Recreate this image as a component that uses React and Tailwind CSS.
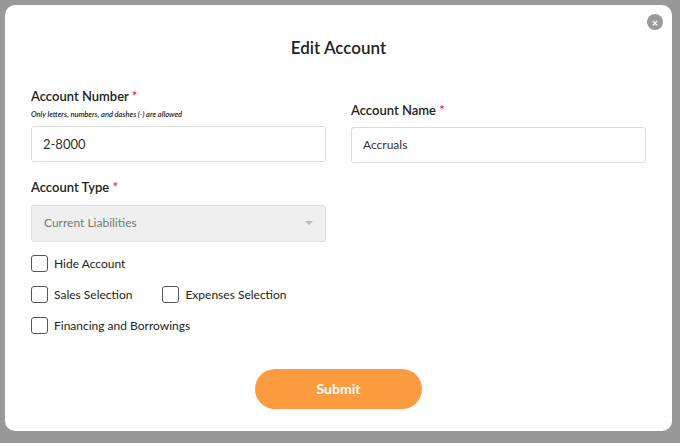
export default function App() {
  const Box = ({ label }) => (
    <label className="flex items-center gap-[6px] text-[12px] text-[#222]">
      <span className="w-[17px] h-[17px] border border-[#555] rounded-[3px] bg-white" />
      {label}
    </label>
  )
  return (
    <div className="w-[680px] h-[443px] bg-[#999] pt-[5px] pl-[5px]" style={{ fontFamily: 'Lato, "Open Sans", sans-serif' }}>
      <div className="relative w-[667px] h-[426px] bg-white rounded-[10px] px-[26px] pt-[30px]">
        <span className="absolute right-[9px] top-[9px] w-[16px] h-[16px] rounded-full bg-[#9a9a9a] flex items-center justify-center text-white text-[11px] font-bold leading-none">×</span>
        <h1 className="text-center text-[17px] font-semibold text-[#222]">Edit Account</h1>
        <div className="grid grid-cols-2 gap-[25px] mt-[26px]">
          <div>
            <p className="text-[13px] font-semibold text-[#222]">Account Number <span className="text-[#e0245e]">*</span></p>
            <p className="text-[7.5px] italic font-semibold text-[#222] mt-[3px]">Only letters, numbers, and dashes (-) are allowed</p>
            <div className="mt-[6px] h-[36px] border border-[#ddd] rounded-[3px] flex items-center px-[11px] text-[13px] text-[#333]">2-8000</div>
            <p className="mt-[16px] text-[13px] font-semibold text-[#222]">Account Type <span className="text-[#e0245e]">*</span></p>
            <div className="mt-[7px] h-[37px] bg-[#efefef] border border-[#e0e0e0] rounded-[3px] flex items-center justify-between px-[12px] text-[12px] text-[#777]">
              Current Liabilities
              <span className="w-0 h-0 border-x-[4px] border-x-transparent border-t-[4px] border-t-[#bbb]" />
            </div>
          </div>
          <div className="pt-[14px]">
            <p className="text-[13px] font-semibold text-[#222]">Account Name <span className="text-[#e0245e]">*</span></p>
            <div className="mt-[7px] h-[36px] border border-[#ddd] rounded-[3px] flex items-center px-[11px] text-[12px] text-[#333]">Accruals</div>
          </div>
        </div>
        <div className="mt-[13px] flex flex-col gap-[13px]">
          <Box label="Hide Account" />
          <div className="flex gap-[30px]">
            <Box label="Sales Selection" />
            <Box label="Expenses Selection" />
          </div>
          <Box label="Financing and Borrowings" />
        </div>
        <div className="flex justify-center mt-[34px]">
          <button className="w-[167px] h-[40px] rounded-full bg-[#fd9b41] text-white text-[14px] font-bold">Submit</button>
        </div>
      </div>
    </div>
  )
}
